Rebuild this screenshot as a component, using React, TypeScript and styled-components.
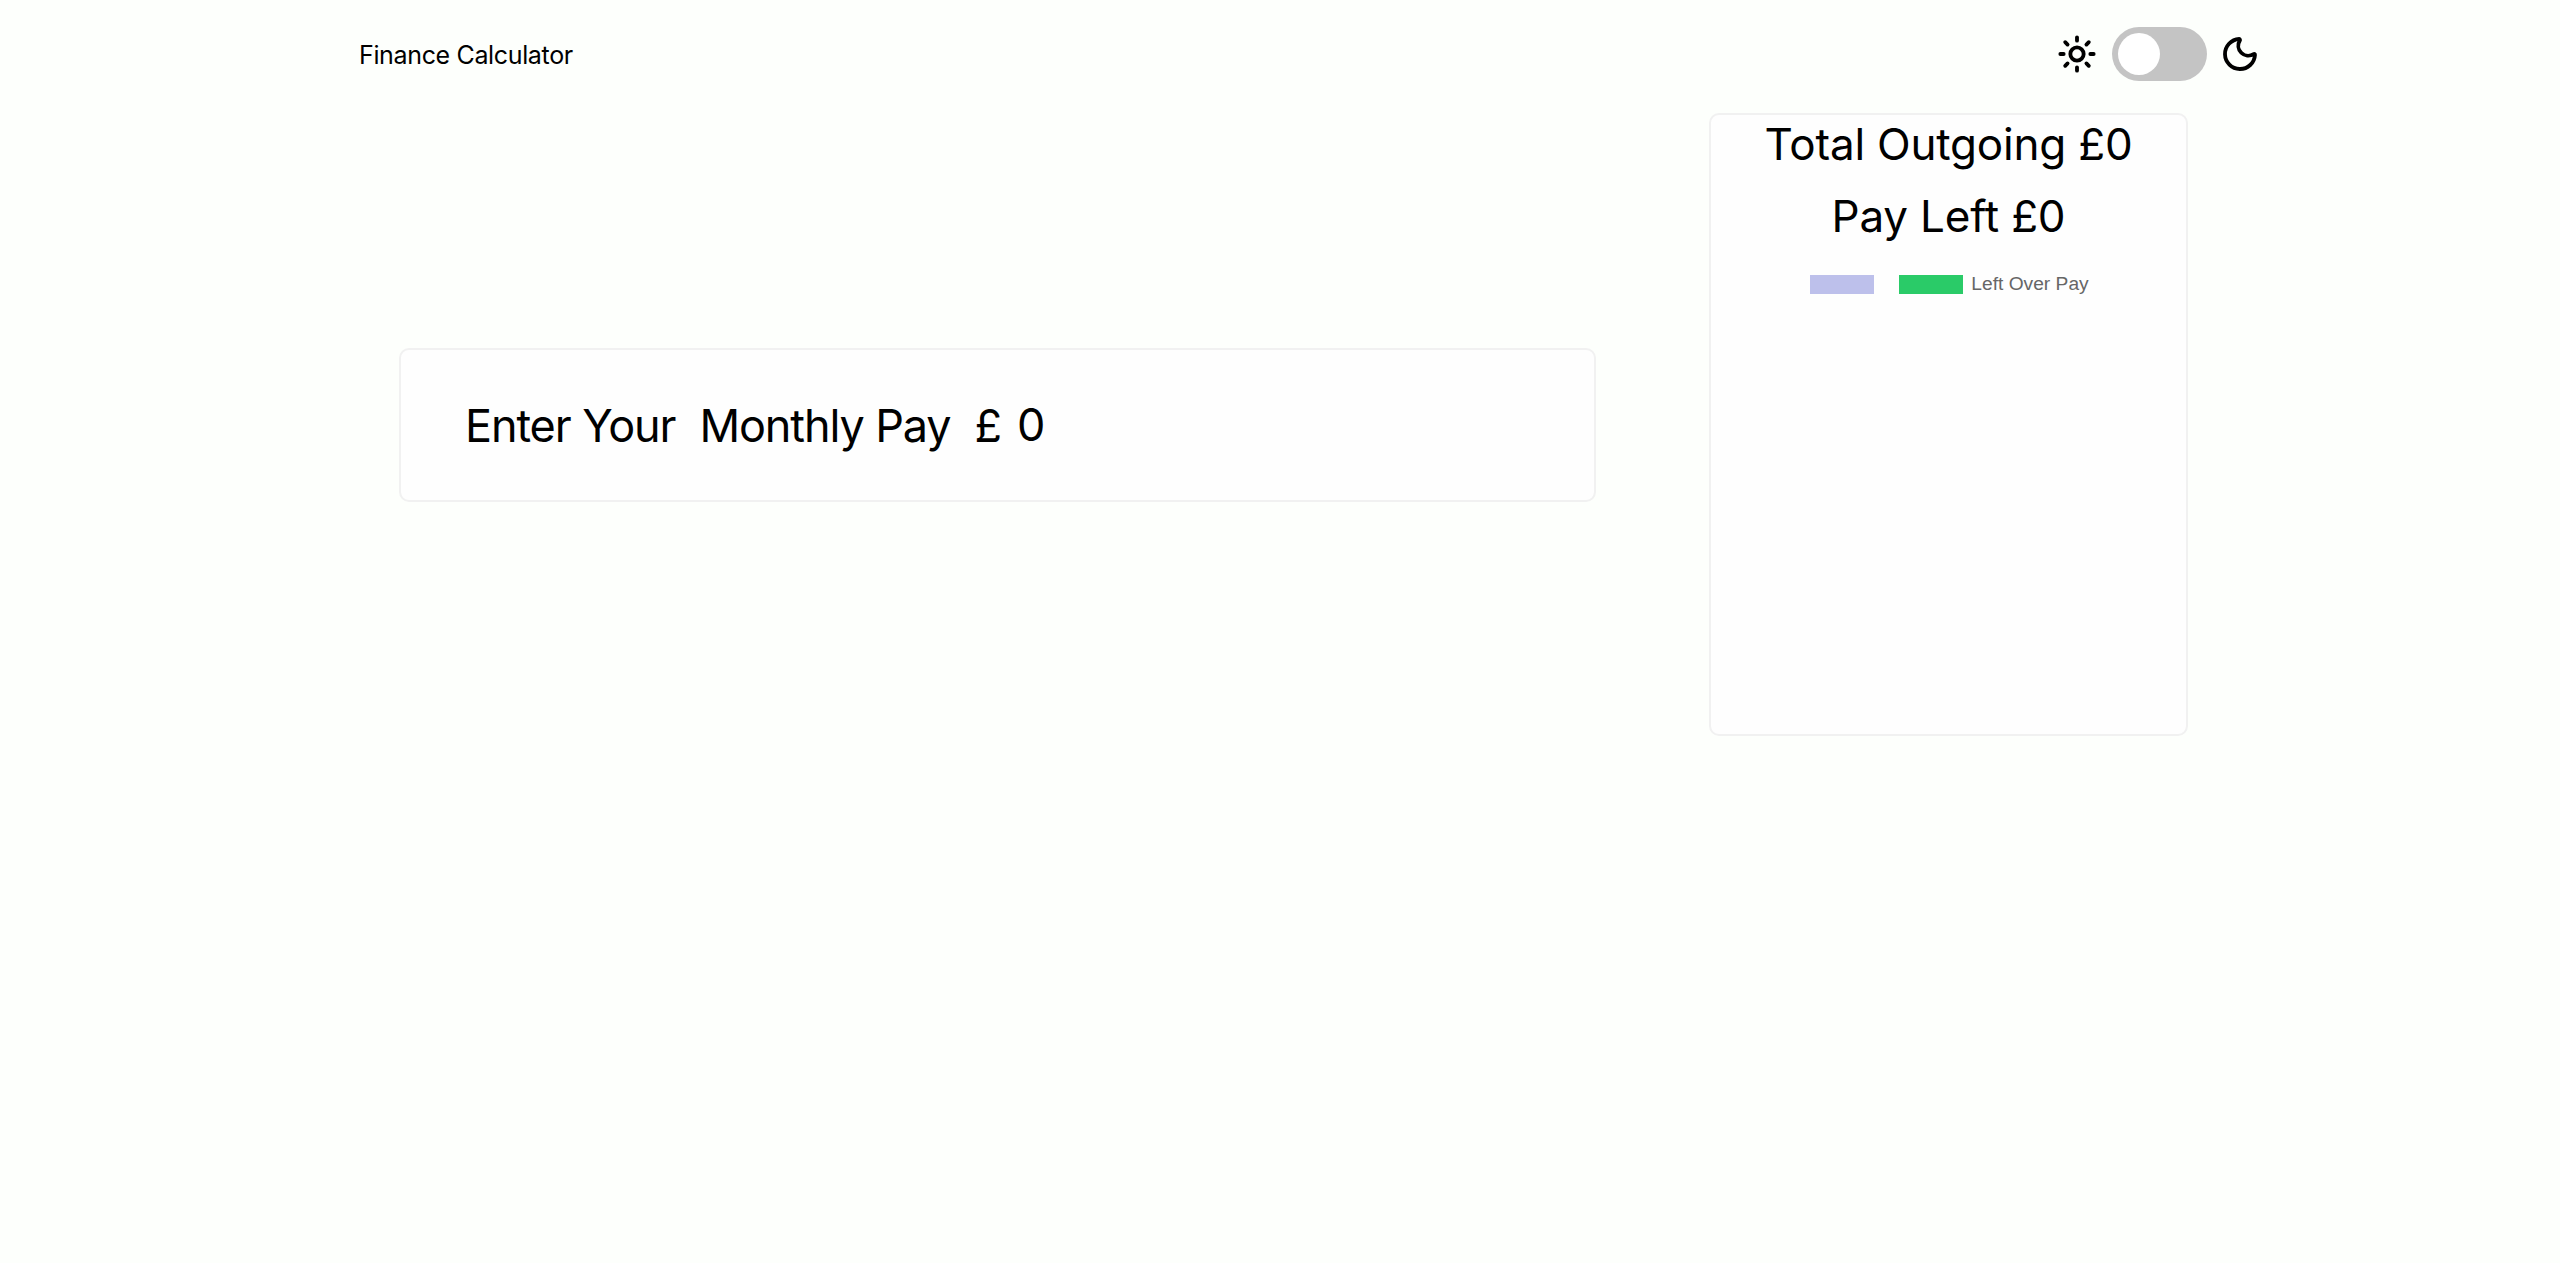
import React from 'react';
import styled, { createGlobalStyle } from 'styled-components';
import { Sun, Moon } from 'lucide-react';

const GlobalStyle = createGlobalStyle`
  html, body {
    margin: 0;
    padding: 0;
    background: #fdfffc;
    color: #000;
    font-family: Inter, "Liberation Sans", sans-serif;
  }
`;

const StyledPage = styled.div`
  width: 2560px;
  min-height: 1263px;
  box-sizing: border-box;
  padding: 0 300px 0 359px;
`;

const StyledNav = styled.nav`
  height: 108px;
  display: flex;
  align-items: center;
  justify-content: space-between;
`;

const StyledBrand = styled.span`
  padding-top: 1px;
  font-size: 25px;
  letter-spacing: -0.35px;
`;

const StyledThemeControls = styled.div`
  display: flex;
  align-items: center;
`;

const StyledSwitch = styled.div`
  width: 95px;
  height: 54px;
  box-sizing: border-box;
  margin: 0 13px 0 15px;
  padding: 6px;
  border-radius: 27px;
  background: #c4c4c4;
`;

const StyledKnob = styled.div`
  width: 42px;
  height: 42px;
  border-radius: 50%;
  background: #fff;
`;

const StyledMain = styled.main`
  display: flex;
  align-items: center;
  padding: 5px 0 0 40px;
`;

const StyledCard = styled.section`
  box-sizing: border-box;
  background: #fefefe;
  border: 2px solid #f1f1f1;
  border-radius: 10px;
`;

const StyledPayCard = styled(StyledCard)`
  width: 1197px;
  height: 154px;
  margin-right: 113px;
  padding: 2px 64px 0;
  display: flex;
  align-items: center;
  font-size: 45px;
  letter-spacing: -1.1px;
`;

const StyledPayLabel = styled.label`
  margin-right: 24px;
`;

const StyledPound = styled.span`
  margin-right: 16px;
`;

const StyledPayInput = styled.input`
  width: 200px;
  padding: 0 0 3px;
  border: none;
  outline: none;
  background: transparent;
  font: inherit;
  letter-spacing: inherit;
  color: #000;
`;

const StyledChartCard = styled(StyledCard)`
  width: 479px;
  height: 623px;
  text-align: center;
`;

const StyledHeading = styled.h2`
  margin: 0 0 14px;
  font-size: 44px;
  font-weight: 400;
  line-height: 58px;
  letter-spacing: -0.2px;
`;

const StyledLegend = styled.div`
  display: flex;
  justify-content: center;
  align-items: center;
  gap: 25px;
  margin-top: 28px;
  padding-left: 2px;
`;

const StyledLegendItem = styled.div`
  display: flex;
  align-items: center;
  gap: 8px;
  font-family: "Liberation Sans", Arial, sans-serif;
  font-size: 19.2px;
  color: #666;
`;

const StyledSwatch = styled.span<{ $color: string }>`
  width: 64px;
  height: 19px;
  background: ${(p) => p.$color};
`;

function App(): JSX.Element {
  return (
    <StyledPage>
      <GlobalStyle />
      <StyledNav>
        <StyledBrand>Finance Calculator</StyledBrand>
        <StyledThemeControls>
          <Sun size={40} strokeWidth={2.3} />
          <StyledSwitch>
            <StyledKnob />
          </StyledSwitch>
          <Moon size={40} strokeWidth={2.3} />
        </StyledThemeControls>
      </StyledNav>
      <StyledMain>
        <StyledPayCard>
          <StyledPayLabel>Enter Your</StyledPayLabel>
          <StyledPayLabel>Monthly Pay</StyledPayLabel>
          <StyledPound>£</StyledPound>
          <StyledPayInput defaultValue="0" />
        </StyledPayCard>
        <StyledChartCard>
          <StyledHeading>Total Outgoing £0</StyledHeading>
          <StyledHeading>Pay Left £0</StyledHeading>
          <StyledLegend>
            <StyledLegendItem>
              <StyledSwatch $color="#bdc0eb" />
            </StyledLegendItem>
            <StyledLegendItem>
              <StyledSwatch $color="#2acb68" />
              Left Over Pay
            </StyledLegendItem>
          </StyledLegend>
        </StyledChartCard>
      </StyledMain>
    </StyledPage>
  );
}

export default App;
